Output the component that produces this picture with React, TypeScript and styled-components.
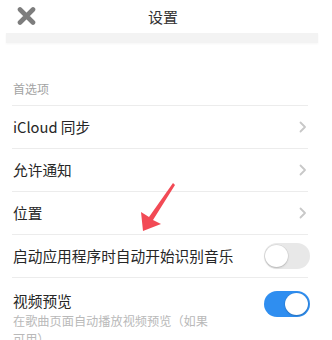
import styled, { createGlobalStyle } from "styled-components";

const GlobalStyle = createGlobalStyle`
  html, body {
    margin: 0;
    padding: 0;
    background: #ffffff;
    font-family: "Noto Sans CJK SC", "Noto Sans", sans-serif;
  }
`;

const Screen = styled.div`
  position: relative;
  width: 332px;
  height: 340px;
  overflow: hidden;
  background: #ffffff;
`;

const TopBar = styled.div`
  position: relative;
  height: 33px;
  display: flex;
  align-items: center;
  justify-content: center;
`;

const CloseButton = styled.div`
  position: absolute;
  left: 17px;
  top: 7px;
  width: 19px;
  height: 18px;
  display: flex;
`;

const Title = styled.div`
  font-size: 15px;
  color: #333333;
  line-height: 20px;
  margin-left: -6px;
`;

const Band = styled.div`
  height: 10px;
  margin: 0 14px 0 6px;
  background: #f3f3f3;
  box-shadow: 0 1px 2px rgba(0, 0, 0, 0.04);
`;

const SectionHeader = styled.div`
  height: 62px;
  box-sizing: border-box;
  display: flex;
  align-items: flex-end;
  padding: 0 0 8px 13px;
  font-size: 12px;
  line-height: 16px;
  color: #a3a3a3;
`;

const List = styled.div`
  margin: 0 24px 0 12px;
`;

const Row = styled.div<{ $tall?: boolean }>`
  display: flex;
  align-items: ${(p) => (p.$tall ? "flex-start" : "center")};
  justify-content: space-between;
  height: ${(p) => (p.$tall ? "auto" : "42px")};
  padding-top: ${(p) => (p.$tall ? "13px" : "0")};
  border-top: 1px solid #ececec;
  padding-left: 1px;
`;

const RowText = styled.div`
  display: flex;
  flex-direction: column;
`;

const Label = styled.div`
  font-size: 14.7px;
  line-height: 20px;
  color: #262626;
`;

const SubLabel = styled.div`
  width: 200px;
  margin-top: 1px;
  font-size: 12.2px;
  line-height: 18px;
  color: #b9b9b9;
`;

const Chevron = styled.svg`
  width: 8px;
  height: 12px;
  margin-right: 1px;
`;

const Switch = styled.div<{ $on?: boolean }>`
  position: relative;
  width: 46px;
  height: 26px;
  border-radius: 13px;
  margin-right: -2px;
  box-sizing: border-box;
  background: ${(p) => (p.$on ? "#2f8ef0" : "#e8e8e8")};
  flex-shrink: 0;
`;

const Knob = styled.div<{ $on?: boolean }>`
  position: absolute;
  top: 2px;
  left: ${(p) => (p.$on ? "21px" : "1px")};
  width: 23px;
  height: 22px;
  border-radius: 50%;
  background: #ffffff;
  box-shadow: 0 1px 2px rgba(0, 0, 0, 0.18), 0 0 0 0.5px rgba(0, 0, 0, 0.08);
`;

const Arrow = styled.svg`
  position: absolute;
  left: 130px;
  top: 181px;
  width: 50px;
  height: 55px;
`;

function ChevronIcon() {
  return (
    <Chevron viewBox="0 0 8 12">
      <path
        d="M1.5 1.5 L6 6 L1.5 10.5"
        fill="none"
        stroke="#c8c8c8"
        strokeWidth="1.8"
        strokeLinecap="round"
        strokeLinejoin="round"
      />
    </Chevron>
  );
}

export default function App() {
  return (
    <Screen>
      <GlobalStyle />
      <TopBar>
        <CloseButton>
          <svg width="19" height="18" viewBox="0 0 19 18">
            <path
              d="M3 2.5 L16 15.5 M16 2.5 L3 15.5"
              stroke="#7d7d7d"
              strokeWidth="4.6"
              strokeLinecap="round"
            />
          </svg>
        </CloseButton>
        <Title>设置</Title>
      </TopBar>
      <Band />
      <SectionHeader>首选项</SectionHeader>
      <List>
        <Row>
          <Label>iCloud 同步</Label>
          <ChevronIcon />
        </Row>
        <Row>
          <Label>允许通知</Label>
          <ChevronIcon />
        </Row>
        <Row>
          <Label>位置</Label>
          <ChevronIcon />
        </Row>
        <Row>
          <Label>启动应用程序时自动开始识别音乐</Label>
          <Switch>
            <Knob />
          </Switch>
        </Row>
        <Row $tall>
          <RowText>
            <Label>视频预览</Label>
            <SubLabel>在歌曲页面自动播放视频预览（如果可用）</SubLabel>
          </RowText>
          <Switch $on>
            <Knob $on />
          </Switch>
        </Row>
      </List>
      <Arrow viewBox="0 0 50 55">
        <polygon
          points="43,2 45,4 23,39 31,43 13,50 11,31 19,36"
          fill="#f24a55"
        />
      </Arrow>
    </Screen>
  );
}
